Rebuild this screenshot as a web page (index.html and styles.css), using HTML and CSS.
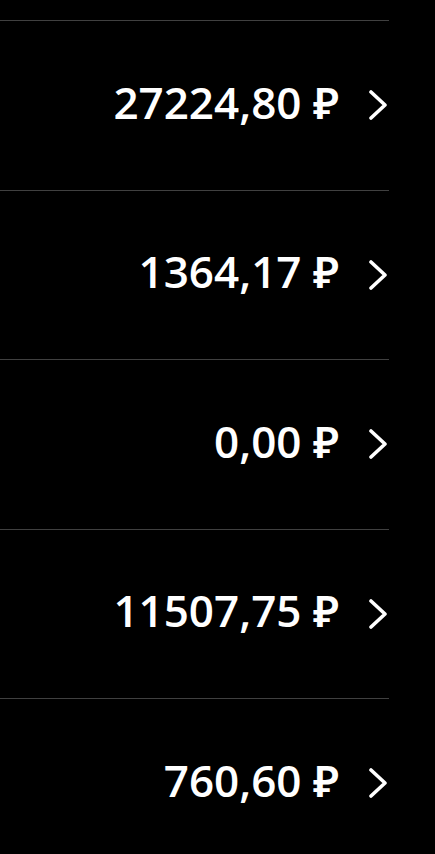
FILE: index.html
```
<!DOCTYPE html>
<html>
<head>
  <title>Счета</title>
<link rel="stylesheet" href="styles.css">
</head>
<body>

<div id="listaSaldos">
  <div class="fila">
    <span class="monto">27224,80 ₽</span>
    <svg class="flecha" viewBox="0 0 18 30"><path d="M2 2 L16 15 L2 28"/></svg>
  </div>
  <div class="fila">
    <span class="monto">1364,17 ₽</span>
    <svg class="flecha" viewBox="0 0 18 30"><path d="M2 2 L16 15 L2 28"/></svg>
  </div>
  <div class="fila">
    <span class="monto">0,00 ₽</span>
    <svg class="flecha" viewBox="0 0 18 30"><path d="M2 2 L16 15 L2 28"/></svg>
  </div>
  <div class="fila">
    <span class="monto">11507,75 ₽</span>
    <svg class="flecha" viewBox="0 0 18 30"><path d="M2 2 L16 15 L2 28"/></svg>
  </div>
  <div class="fila">
    <span class="monto">760,60 ₽</span>
    <svg class="flecha" viewBox="0 0 18 30"><path d="M2 2 L16 15 L2 28"/></svg>
  </div>
</div>

</body>
</html>
```
FILE: styles.css
```
body, html {
  height: 100%;
  margin: 0;
  background-color: #000;
  overflow: hidden;
}

#listaSaldos {
  width: 389px;
  padding-top: 20px;
}

.fila {
  display: flex;
  align-items: center;
  justify-content: flex-end;
  gap: 30px;
  height: 169.5px;
  box-sizing: border-box;
  border-top: 1px solid #404040;
  padding-right: 2px;
}

.monto {
  color: white;
  font-family: 'Open Sans', 'Noto Sans', sans-serif;
  font-weight: 600;
  font-size: 44px;
  line-height: 1;
  margin-bottom: 7px;
}

.flecha {
  width: 18px;
  height: 30px;
  fill: none;
  stroke: white;
  stroke-width: 3.6;
  stroke-linecap: round;
  stroke-linejoin: round;
}
```
